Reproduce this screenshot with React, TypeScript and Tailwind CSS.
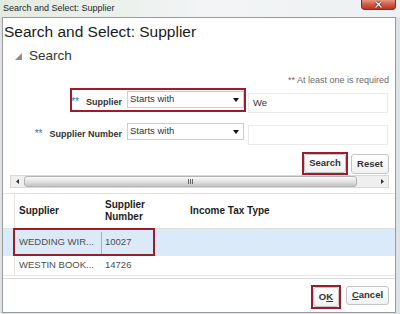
import React from 'react';

const font = "font-['Liberation_Sans',Arial,sans-serif]";

// small black dropdown caret
const Caret = () => (
    <svg width="6" height="4" viewBox="0 0 6 4" className="shrink-0">
        <polygon points="0,0 6,0 3,4" fill="#111" />
    </svg>
)

const Select = () => (
    <div className="ml-[5px] mt-[3px] w-[117px] h-[17px] flex items-center border border-[#cdcdcd] bg-white pl-[2px] pr-[4px]">
        <span className="flex-1 text-[9.5px] text-[#333]">Starts with</span>
        <Caret />
    </div>
)

const Btn = ({ children, className = '' }: { children: React.ReactNode, className?: string }) => (
    <div className={`flex items-center justify-center rounded-[3px] border border-[#c4c4c4] bg-linear-to-b from-white to-[#f1f1f1] text-[9.5px] font-bold text-[#333] ${className}`}>
        {children}
    </div>
)

const RedBox = ({ className }: { className: string }) => (
    <div className={`absolute border-2 border-[#9c1c2b] ${className}`} />
)

const App = () => {
    return (
        <div className={`w-[400px] h-[314px] flex flex-col overflow-hidden bg-[#dde2e7] ${font}`}>
            {/* window title bar */}
            <div className="h-[17px] flex items-start bg-linear-to-r from-[#e3ebe0] via-[#f2f4f5] to-[#eef1f3]">
                <span className="pl-[3px] text-[9px] leading-[16px] text-[#1e1e1e]">Search and Select: Supplier</span>
                <div className="ml-auto mr-[4px] w-[35px] h-[10px] flex items-center justify-center rounded-b-[4px] border border-t-0 border-[#8a2a1f] bg-linear-to-b from-[#e69486] via-[#d25a45] to-[#b8361f]">
                    <svg width="9" height="7" viewBox="0 0 9 7">
                        <path d="M1.5 0.5 L7.5 6.5 M7.5 0.5 L1.5 6.5" stroke="#5a1a10" strokeWidth="2.6" />
                        <path d="M1.5 0.5 L7.5 6.5 M7.5 0.5 L1.5 6.5" stroke="#fff" strokeWidth="1.4" />
                    </svg>
                </div>
            </div>

            {/* dialog panel */}
            <div className="ml-[2px] mr-[4px] mb-[1px] flex-1 flex flex-col bg-white border border-[#9a9a9a]">
                <h1 className="h-[28px] pl-[1px] text-[15.5px] leading-[28px] text-[#1a1a1a]">Search and Select: Supplier</h1>

                <div className="h-[20px] flex items-center pl-[12px]">
                    <svg width="7" height="7" viewBox="0 0 7 7">
                        <polygon points="7,0 7,7 0,7" fill="#8c8c8c" />
                    </svg>
                    <span className="ml-[7px] text-[13.5px] text-[#333]">Search</span>
                </div>

                <div className="h-[22px] pt-[7px] pr-[6px] text-right text-[9px] leading-[14px] text-[#6a6a6a]">** At least one is required</div>

                {/* Supplier */}
                <div className="relative h-[32px] flex items-start">
                    <div className="w-[119px] mt-[8px] text-right text-[9px] leading-[12px] font-bold text-[#333]">
                        <span className="mr-[7px] font-normal text-[10px] text-[#3c6db5]">**</span>Supplier
                    </div>
                    <Select />
                    <div className="ml-[4px] mt-[5px] w-[140px] h-[20px] flex items-center border border-[#ebebeb] pl-[4px] text-[9.5px] text-[#333]">We</div>
                    <RedBox className="left-[67px] top-0 w-[176px] h-[24px]" />
                </div>

                {/* Supplier Number */}
                <div className="h-[32px] flex items-start">
                    <div className="w-[119px] mt-[8px] text-right text-[9px] leading-[12px] font-bold text-[#333]">
                        <span className="mr-[7px] font-normal text-[10px] text-[#3c6db5]">**</span>Supplier Number
                    </div>
                    <Select />
                    <div className="ml-[4px] mt-[5px] w-[140px] h-[20px] border border-[#ebebeb]" />
                </div>

                <div className="h-[23px] flex justify-end items-start pr-[6px]">
                    <div className="w-[46px] h-[23px] flex border-2 border-[#9c1c2b]">
                        <Btn className="flex-1">Search</Btn>
                    </div>
                    <Btn className="ml-[3px] mt-[2px] w-[38px] h-[20px]">Reset</Btn>
                </div>

                {/* horizontal scrollbar */}
                <div className="ml-[7px] mr-[6px] h-[13px] flex items-stretch bg-[#efefef] border border-[#d8d8d8]">
                    <div className="w-[13px] flex items-center justify-center">
                        <svg width="3" height="5" viewBox="0 0 3 5"><polygon points="3,0 3,5 0,2.5" fill="#333" /></svg>
                    </div>
                    <div className="w-[333px] flex items-center justify-center rounded-[3px] border border-[#b4b4b4] bg-linear-to-b from-[#fafafa] via-[#e2e2e2] to-[#c4c4c4]">
                        <div className="flex gap-[1px]">
                            <div className="w-px h-[5px] bg-[#666]" />
                            <div className="w-px h-[5px] bg-[#666]" />
                            <div className="w-px h-[5px] bg-[#666]" />
                        </div>
                    </div>
                    <div className="flex-1 flex items-center justify-end pr-[4px]">
                        <svg width="3" height="5" viewBox="0 0 3 5"><polygon points="0,0 0,5 3,2.5" fill="#333" /></svg>
                    </div>
                </div>

                <div className="h-[6px] border-b border-[#e3e3e3]" />

                {/* results table */}
                <div className="h-[35px] flex items-stretch border-b border-[#e0e0e0] text-[10px] font-bold text-[#1d1d1d] leading-[12px]">
                    <div className="w-[11px]" />
                    <div className="w-[87px] flex items-center border-l border-[#e6e6e6] pl-[4px]">Supplier</div>
                    <div className="w-[84px] flex items-center pl-[4px]">Supplier<br />Number</div>
                    <div className="flex items-center pl-[5px]">Income Tax Type</div>
                </div>

                <div className="relative h-[27px] flex items-center bg-[#dbeaf8] text-[9.5px] text-[#4d4d4d]">
                    <div className="w-[11px]" />
                    <div className="w-[87px] pl-[5px]">WEDDING WIR...</div>
                    <div className="w-px h-[22px] bg-[#a9b3be]" />
                    <div className="pl-[3px]">10027</div>
                    <RedBox className="left-[10px] top-[-1px] w-[142px] h-[28px]" />
                </div>

                <div className="h-[20px] flex items-stretch border-b border-[#e6e6e6] text-[9.5px] text-[#4d4d4d]">
                    <div className="w-[11px]" />
                    <div className="w-[87px] flex items-center border-l border-[#e6e6e6] pl-[4px]">WESTIN BOOK...</div>
                    <div className="flex items-center pl-[4px]">14726</div>
                </div>

                <div className="h-[2px]" />

                {/* footer */}
                <div className="flex-1 flex justify-end items-start pt-[6px] pr-[6px] border-t border-[#dcdcdc]">
                    <div className="w-[30px] h-[24px] flex border-2 border-[#9c1c2b]">
                        <Btn className="flex-1">O<span className="underline">K</span></Btn>
                    </div>
                    <Btn className="ml-[5px] mt-[1px] w-[43px] h-[19px]"><span className="underline">C</span>ancel</Btn>
                </div>
            </div>
        </div>
    )
}

export default App
